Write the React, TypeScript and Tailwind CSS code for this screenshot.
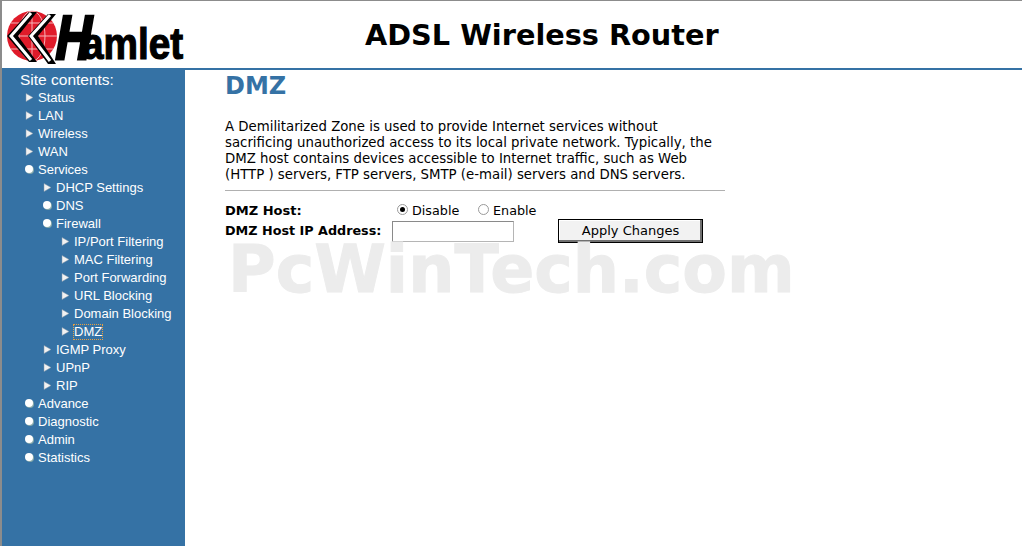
import React from 'react';

type NavItem = { label: string; open?: boolean; depth: number; focused?: boolean };

const navItems: NavItem[] = [
  { label: 'Status', depth: 0 },
  { label: 'LAN', depth: 0 },
  { label: 'Wireless', depth: 0 },
  { label: 'WAN', depth: 0 },
  { label: 'Services', depth: 0, open: true },
  { label: 'DHCP Settings', depth: 1 },
  { label: 'DNS', depth: 1, open: true },
  { label: 'Firewall', depth: 1, open: true },
  { label: 'IP/Port Filtering', depth: 2 },
  { label: 'MAC Filtering', depth: 2 },
  { label: 'Port Forwarding', depth: 2 },
  { label: 'URL Blocking', depth: 2 },
  { label: 'Domain Blocking', depth: 2 },
  { label: 'DMZ', depth: 2, focused: true },
  { label: 'IGMP Proxy', depth: 1 },
  { label: 'UPnP', depth: 1 },
  { label: 'RIP', depth: 1 },
  { label: 'Advance', depth: 0, open: true },
  { label: 'Diagnostic', depth: 0, open: true },
  { label: 'Admin', depth: 0, open: true },
  { label: 'Statistics', depth: 0, open: true },
];

const depthClass = ['pl-[23px]', 'pl-[41px]', 'pl-[59px]'];

const Logo = () => (
  <svg width="183" height="64" viewBox="0 0 183 64" className="block">
    <circle cx="30" cy="32" r="25" fill="#e01b2a" />
    <g stroke="#f6b4b8" strokeWidth="1" fill="none">
      <ellipse cx="30" cy="32" rx="13" ry="25" />
      <path d="M5 32H55M9 19H51M9 45H51M30 7V57" />
    </g>
    <path d="M27 8L5 32L27 58H35L16 32L35 8Z" fill="#000" />
    <path d="M29 9L9 32L29 56" stroke="#fff" strokeWidth="3" fill="none" />
    <path d="M46 10L26 32L46 60H54L36 32L54 10Z" fill="#000" />
    <path d="M48 11L29 32L48 57" stroke="#fff" strokeWidth="3" fill="none" />
    <text transform="translate(80 55) scale(0.88 1)" fontFamily="'Liberation Sans', sans-serif" fontWeight="700" fontSize="44" stroke="#000" strokeWidth="1.2">amlet</text>
    <text transform="translate(51 55) skewX(-10) scale(0.8 1)" fontFamily="'Liberation Sans', sans-serif" fontWeight="700" fontSize="62" stroke="#000" strokeWidth="3">H</text>
  </svg>
);

const Bullet = ({ open }: { open?: boolean }) =>
  open ? (
    <span className="w-[8px] h-[8px] rounded-full bg-white shadow-[1px_1px_0_#8aa]" />
  ) : (
    <svg width="9" height="9" viewBox="0 0 9 9">
      <path d="M1 0.5L8 4.5L1 8.5Z" fill="#f2f2f2" stroke="#8b9bab" strokeWidth="0.5" />
    </svg>
  );

const Sidebar = () => (
  <aside className="w-[183px] shrink-0 bg-[#3572a5] text-white font-['Liberation_Sans',Arial,sans-serif] text-[13px] pt-[1px]">
    <div className="pl-[18px] text-[15.5px] leading-[18px] h-[18px]">Site contents:</div>
    {navItems.map((item) => (
      <div key={item.label} className={`${depthClass[item.depth]} flex items-center h-[18px] leading-[18px]`}>
        <span className="w-[13px] flex items-center -mt-[2px]">
          <Bullet open={item.open} />
        </span>
        <span className={item.focused ? 'outline-1 outline-dotted outline-[#e8a040] leading-[14px]' : ''}>{item.label}</span>
      </div>
    ))}
  </aside>
);

const Radio = ({ checked }: { checked?: boolean }) => (
  <span className="w-[11px] h-[11px] rounded-full border border-[#9a9a9a] bg-white flex items-center justify-center -mt-[2px]">
    {checked && <span className="w-[5px] h-[5px] rounded-full bg-black" />}
  </span>
);

export default function App() {
  return (
    <div className="w-[1022px] h-[546px] overflow-hidden bg-white flex flex-col border-t border-l-2 border-[#8c8c8c] font-['DejaVu_Sans',Verdana,sans-serif] relative">
      <header className="h-[69px] shrink-0 flex border-b-2 border-[#3572a5]">
        <div className="w-[183px] pt-[3px]">
          <Logo />
        </div>
        <h1 className="ml-[180px] mt-[17px] text-[28.75px] leading-[34px] font-bold text-black">ADSL Wireless Router</h1>
      </header>
      <div className="flex flex-1 min-h-0">
        <Sidebar />
        <main className="pl-[40px] relative flex-1">
          <h2 className="text-[24px] leading-[29px] font-bold text-[#3572a5] mt-[2px]">DMZ</h2>
          <p className="w-[510px] mt-[18px] text-[13.3px] leading-[16px] text-black whitespace-nowrap">
            A Demilitarized Zone is used to provide Internet services without<br />
            sacrificing unauthorized access to its local private network. Typically, the<br />
            DMZ host contains devices accessible to Internet traffic, such as Web<br />
            (HTTP ) servers, FTP servers, SMTP (e-mail) servers and DNS servers.
          </p>
          <hr className="w-[500px] mt-[7px] border-t border-[#b0b0b0]" />
          <div className="mt-[10px] text-[13px] leading-[18px] text-black">
            <div className="flex h-[18px] items-center pt-[1px]">
              <span className="w-[172px] font-bold">DMZ Host:</span>
              <label className="flex items-center gap-[4px] w-[81px]">
                <Radio checked />
                <span className="text-[12.75px]">Disable</span>
              </label>
              <label className="flex items-center gap-[4px]">
                <Radio />
                <span className="text-[12.75px]">Enable</span>
              </label>
            </div>
            <div className="flex items-center h-[22px] mt-[1px]">
              <span className="w-[167px] font-bold text-[12.75px] whitespace-nowrap">DMZ Host IP Address:</span>
              <span className="w-[122px] h-[21px] border border-[#b5b5b5] border-t-[#8a8a8a] border-l-[#8a8a8a] bg-white" />
              <button className="ml-[44px] w-[145px] h-[24px] bg-[#f2f2f2] border border-black shadow-[inset_-2px_-2px_0_#707070,inset_1px_1px_0_#fff] text-[13px] text-black">
                Apply Changes
              </button>
            </div>
          </div>
        </main>
      </div>
      <div className="absolute left-[226px] top-[244px] text-[65px] leading-[50px] font-bold text-[#ececec] [-webkit-text-stroke:1px_#ececec] pointer-events-none whitespace-nowrap">
        PcWinTech.com
      </div>
    </div>
  );
}
